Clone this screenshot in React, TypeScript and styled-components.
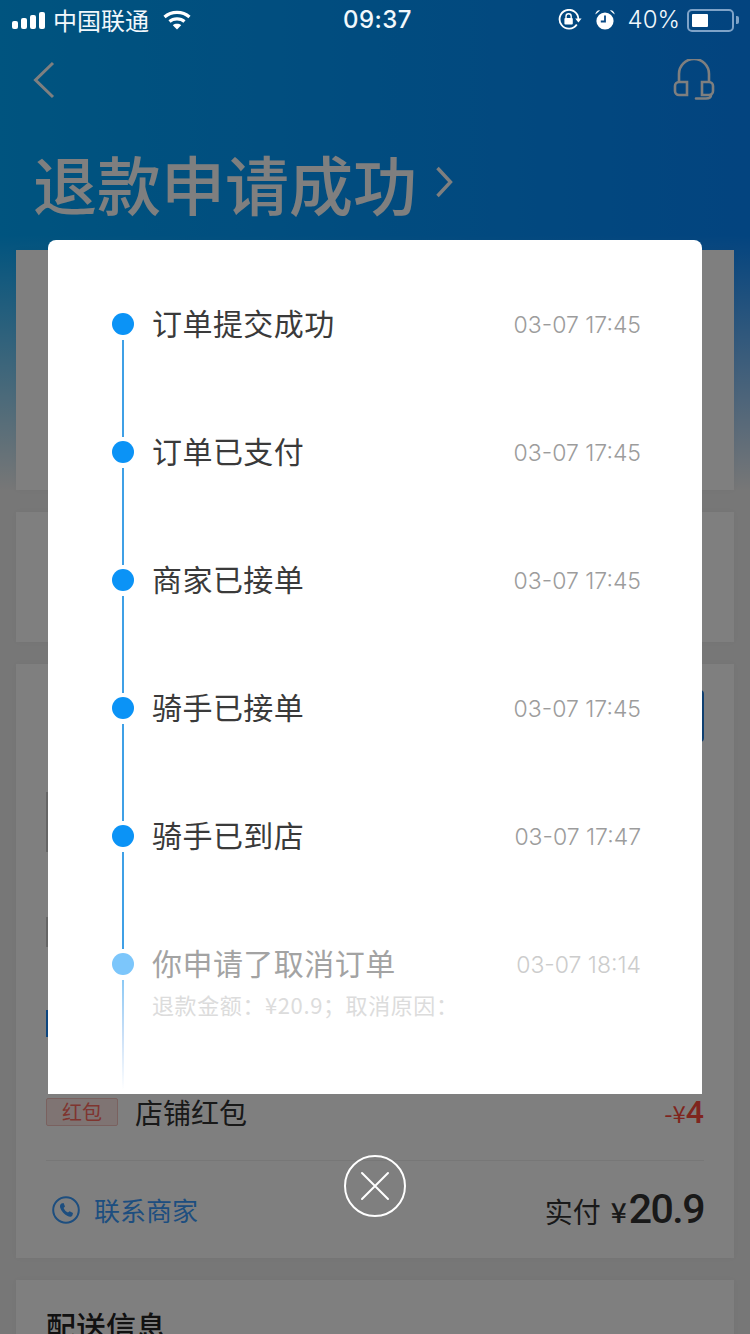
import styled, { createGlobalStyle } from "styled-components";

const CJK = `"Noto Sans CJK SC", "Noto Sans", sans-serif`;
const LATIN = `Inter, "Noto Sans CJK SC", sans-serif`;

const GlobalStyle = createGlobalStyle`
    html, body {
        margin: 0;
        padding: 0;
        background: #eeeeee;
    }
    * {
        box-sizing: border-box;
    }
`;

const STEPS = [
    { title: "订单提交成功", time: "03-07 17:45" },
    { title: "订单已支付", time: "03-07 17:45" },
    { title: "商家已接单", time: "03-07 17:45" },
    { title: "骑手已接单", time: "03-07 17:45" },
    { title: "骑手已到店", time: "03-07 17:47" },
];

const App = () => {
    return (
        <Page>
            <GlobalStyle />
            <StatusBar>
                <StatusSide>
                    <SignalBars>
                        <Bar $h={8} />
                        <Bar $h={11} />
                        <Bar $h={14} />
                        <Bar $h={17} />
                    </SignalBars>
                    <Carrier>中国联通</Carrier>
                    <WifiIcon />
                </StatusSide>
                <Clock>09:37</Clock>
                <StatusRight>
                    <RotationLockIcon />
                    <AlarmIcon />
                    <BatteryText>40%</BatteryText>
                    <Battery>
                        <BatteryFill />
                    </Battery>
                    <BatteryTip />
                </StatusRight>
            </StatusBar>

            <NavBar>
                <BackIcon />
                <HeadsetIcon />
            </NavBar>

            <TitleRow>
                <PageTitle>退款申请成功</PageTitle>
                <TitleChevron />
            </TitleRow>

            <Cards>
                <StatusCard />
                <RiderCard />
                <OrderCard>
                    <OrderButton />
                    <ItemThumb />
                    <ItemNote />
                    <ItemTag />
                    <DiscountRow>
                        <DiscountLeft>
                            <RedTag>红包</RedTag>
                            <DiscountName>店铺红包</DiscountName>
                        </DiscountLeft>
                        <DiscountValue>
                            -¥<strong>4</strong>
                        </DiscountValue>
                    </DiscountRow>
                    <Divider />
                    <OrderFooter>
                        <ContactLink>
                            <PhoneIcon />
                            <span>联系商家</span>
                        </ContactLink>
                        <PaidTotal>
                            实付<Yen>¥</Yen>
                            <Amount>20.9</Amount>
                        </PaidTotal>
                    </OrderFooter>
                </OrderCard>
                <DeliveryCard>
                    <DeliveryTitle>配送信息</DeliveryTitle>
                </DeliveryCard>
            </Cards>

            <Overlay>
                <Modal>
                    {STEPS.map((step) => (
                        <Step key={step.title}>
                            <Rail>
                                <Dot />
                                <RailLine />
                            </Rail>
                            <StepBody>
                                <StepHead>
                                    <StepTitle>{step.title}</StepTitle>
                                    <StepTime>{step.time}</StepTime>
                                </StepHead>
                            </StepBody>
                        </Step>
                    ))}
                    <Step $last>
                        <Rail>
                            <Dot $faded />
                            <RailLine $fading />
                        </Rail>
                        <StepBody>
                            <StepHead>
                                <StepTitle $faded>你申请了取消订单</StepTitle>
                                <StepTime $faded>03-07 18:14</StepTime>
                            </StepHead>
                            <StepNote>退款金额：¥20.9；取消原因：</StepNote>
                        </StepBody>
                    </Step>
                </Modal>
                <CloseButton aria-label="关闭">
                    <svg width="30" height="30" viewBox="0 0 30 30" fill="none" stroke="#fff" strokeWidth="2" strokeLinecap="round">
                        <path d="M2 2 L28 28 M28 2 L2 28" />
                    </svg>
                </CloseButton>
            </Overlay>
        </Page>
    );
};

const WifiIcon = () => (
    <WifiSvg viewBox="0 0 28 20" fill="none" stroke="#fff" strokeWidth="3.2">
        <path d="M1.5 7 C8.5 0.8 19.5 0.8 26.5 7" />
        <path d="M6.5 11.5 C10.5 8 17.5 8 21.5 11.5" />
        <path d="M14 19.5 L9.8 15.2 C12 13.4 16 13.4 18.2 15.2 Z" fill="#fff" stroke="none" />
    </WifiSvg>
);

const RotationLockIcon = () => (
    <svg width="24" height="22" viewBox="0 0 24 22" fill="none">
        <path d="M18.8 15.5 A9.4 9.4 0 1 1 20.4 10" stroke="#fff" strokeWidth="1.8" />
        <path d="M17.2 9.6 L23.6 9.6 L20.4 13.4 Z" fill="#fff" />
        <rect x="6.4" y="9" width="8.4" height="6.6" rx="1" fill="#fff" />
        <path d="M8 9 V7.4 A2.6 2.6 0 0 1 13.2 7.4 V9" stroke="#fff" strokeWidth="1.4" />
    </svg>
);

const AlarmIcon = () => (
    <svg width="22" height="22" viewBox="0 0 22 22" fill="none">
        <circle cx="11" cy="12" r="8.6" fill="#fff" />
        <path d="M11 6.5 V12.5 H6.8" stroke="#0a4a85" strokeWidth="1.8" />
        <path d="M1.4 5.6 A4 4 0 0 1 6 1.4 Z M20.6 5.6 A4 4 0 0 0 16 1.4 Z" fill="#fff" />
    </svg>
);

const BackIcon = () => (
    <svg width="24" height="38" viewBox="0 0 24 38" fill="none" stroke="#ffffff" strokeWidth="3">
        <path d="M21 2 L3.5 19 L21 36" />
    </svg>
);

const HeadsetIcon = () => (
    <svg width="42" height="42" viewBox="0 0 42 42" fill="none" stroke="#ffffff" strokeWidth="2.6">
        <path d="M6 22 V15 A15 15 0 0 1 36 15 V22" />
        <path d="M14 23 H6 A4 4 0 0 0 2 27 V32 A4 4 0 0 0 6 36 H14 Z" />
        <path d="M29 23 H36 A4 4 0 0 1 40 27 V32 A4 4 0 0 1 36 36 H29 Z" />
        <path d="M38 36 Q38 39.5 33 39.5 H23" strokeLinecap="round" />
    </svg>
);

const TitleChevron = () => (
    <ChevronSvg viewBox="0 0 18 32" fill="none" stroke="#ffffff" strokeWidth="3.4">
        <path d="M2.5 2 L15.5 16 L2.5 30" />
    </ChevronSvg>
);

const PhoneIcon = () => (
    <svg width="28" height="28" viewBox="0 0 28 28" fill="none">
        <circle cx="14" cy="14" r="12.8" stroke="#3a9cff" strokeWidth="2" />
        <path
            d="M9.4 7.4 L11.6 7 L13 10.6 L11.6 12 C12.2 13.8 14 15.8 16 16.6 L17.6 15.2 L21 17 L20.4 19.4 C19.6 20.8 17.6 21 15.6 20 C12 18.4 9.4 15.4 8.2 11.8 C7.6 9.8 8.2 8.2 9.4 7.4 Z"
            fill="#3a9cff"
        />
    </svg>
);

const Page = styled("div")`
    position: relative;
    width: 750px;
    height: 1334px;
    overflow: hidden;
    font-family: ${CJK};
    background:
        linear-gradient(to bottom, rgba(238, 238, 238, 0) 235px, #eeeeee 490px),
        linear-gradient(to right, #00a8ff, #0688ff);
`;

const StatusBar = styled("div")`
    position: relative;
    z-index: 2;
    display: grid;
    grid-template-columns: 1fr auto 1fr;
    align-items: center;
    height: 40px;
    padding: 0 11px 0 12px;
    color: #f2f8fc;
`;

const StatusSide = styled("div")`
    display: flex;
    align-items: center;
`;

const SignalBars = styled("div")`
    display: flex;
    align-items: flex-end;
    gap: 3px;
    height: 18px;
`;

const Bar = styled("span")<{ $h: number }>`
    width: 6px;
    height: ${(p) => p.$h}px;
    border-radius: 2px;
    background: #fff;
`;

const Carrier = styled("span")`
    margin-left: 8px;
    font-size: 24px;
    line-height: 30px;
`;

const WifiSvg = styled("svg")`
    width: 28px;
    height: 20px;
    margin-left: 14px;
`;

const Clock = styled("span")`
    margin-left: 4px;
    font-family: ${LATIN};
    font-size: 24px;
    font-weight: 500;
    letter-spacing: 0.5px;
    line-height: 30px;
`;

const StatusRight = styled("div")`
    display: flex;
    align-items: center;
    justify-content: flex-end;
    gap: 12px;
`;

const BatteryText = styled("span")`
    margin-right: -5px;
    font-family: ${LATIN};
    font-size: 24px;
    font-weight: 300;
    line-height: 30px;
`;

const Battery = styled("div")`
    width: 47px;
    height: 23px;
    padding: 3px;
    border: 2px solid #7fa3c8;
    border-radius: 5px;
`;

const BatteryFill = styled("div")`
    width: 16px;
    height: 100%;
    background: #fff;
    border-radius: 1px;
`;

const BatteryTip = styled("span")`
    width: 3px;
    height: 8px;
    margin-left: -10px;
    background: #7fa3c8;
    border-radius: 0 2px 2px 0;
`;

const NavBar = styled("div")`
    display: flex;
    align-items: center;
    justify-content: space-between;
    height: 42px;
    margin-top: 19px;
    padding: 0 35px 0 32px;
`;

const TitleRow = styled("div")`
    display: flex;
    align-items: center;
    gap: 18px;
    height: 90px;
    margin-top: 36px;
    padding-left: 33px;
`;

const PageTitle = styled("h1")`
    margin: 0;
    font-size: 64px;
    line-height: 90px;
    font-weight: 500;
    color: #ffffff;
`;

const ChevronSvg = styled("svg")`
    width: 18px;
    height: 32px;
`;

const Cards = styled("div")`
    display: flex;
    flex-direction: column;
    gap: 22px;
    margin-top: 23px;
    padding: 0 16px;
`;

const Card = styled("div")`
    background: #ffffff;
    box-shadow: 0 0 6px rgba(0, 0, 0, 0.03);
`;

const StatusCard = styled(Card)`
    height: 240px;
`;

const RiderCard = styled(Card)`
    height: 130px;
`;

const OrderCard = styled(Card)`
    height: 594px;
    padding: 26px 30px 0 30px;
`;

const OrderButton = styled("div")`
    width: 180px;
    height: 52px;
    margin-left: auto;
    border: 2px solid #1f7fe0;
    border-radius: 4px;
`;

const ItemThumb = styled("div")`
    width: 110px;
    height: 60px;
    margin-top: 50px;
    border: 2px solid #cccccc;
`;

const ItemNote = styled("div")`
    width: 60px;
    height: 30px;
    margin-top: 65px;
    border: 2px solid #cccccc;
`;

const ItemTag = styled("div")`
    width: 60px;
    height: 27px;
    margin-top: 63px;
    background: #1a8cff;
`;

const DiscountRow = styled("div")`
    display: flex;
    align-items: center;
    justify-content: space-between;
    height: 40px;
    margin-top: 55px;
`;

const DiscountLeft = styled("div")`
    display: flex;
    align-items: center;
    gap: 17px;
`;

const RedTag = styled("span")`
    width: 72px;
    height: 28px;
    border: 1px solid #f4c3be;
    border-radius: 2px;
    background: #ffe9e6;
    color: #ff6a5f;
    font-size: 20px;
    line-height: 26px;
    text-align: center;
`;

const DiscountName = styled("span")`
    color: #333333;
    font-size: 28px;
    line-height: 40px;
`;

const DiscountValue = styled("span")`
    color: #ff4a3d;
    font-size: 24px;
    line-height: 40px;

    strong {
        font-family: "Roboto", sans-serif;
        font-size: 32px;
        font-weight: 500;
    }
`;

const Divider = styled("div")`
    height: 1px;
    margin-top: 28px;
    background: #eeeeee;
`;

const OrderFooter = styled("div")`
    display: flex;
    align-items: center;
    justify-content: space-between;
    height: 50px;
    margin-top: 24px;
`;

const ContactLink = styled("div")`
    display: flex;
    align-items: center;
    gap: 14px;
    padding-left: 6px;
    color: #3a9cff;
    font-size: 26px;
    line-height: 36px;
`;

const PaidTotal = styled("div")`
    display: flex;
    align-items: baseline;
    margin-top: -2px;
    color: #333333;
    font-size: 28px;
`;

const Yen = styled("span")`
    margin-left: 10px;
    font-weight: 500;
`;

const Amount = styled("span")`
    margin-left: 2px;
    font-family: "Roboto", sans-serif;
    font-size: 41px;
    font-weight: 500;
    letter-spacing: -1.5px;
`;

const DeliveryCard = styled(Card)`
    height: 200px;
    padding: 25px 30px;
`;

const DeliveryTitle = styled("h2")`
    margin: 0;
    color: #222222;
    font-size: 30px;
    font-weight: 500;
    line-height: 40px;
`;

const Overlay = styled("div")`
    position: absolute;
    inset: 0;
    z-index: 1;
    display: flex;
    flex-direction: column;
    align-items: center;
    padding-top: 240px;
    background: rgba(0, 0, 0, 0.5);
`;

const Modal = styled("div")`
    width: 654px;
    height: 854px;
    padding: 73px 61px 0 64px;
    background: #ffffff;
    border-radius: 8px 8px 0 0;
`;

const Step = styled("div")<{ $last?: boolean }>`
    display: flex;
    gap: 18px;
    height: ${(p) => (p.$last ? 137 : 128)}px;
`;

const Rail = styled("div")`
    display: flex;
    flex-direction: column;
    align-items: center;
    flex: none;
    width: 22px;
`;

const Dot = styled("span")<{ $faded?: boolean }>`
    flex: none;
    width: 22px;
    height: 22px;
    border-radius: 50%;
    background: ${(p) => (p.$faded ? "#7cc6fb" : "#0b93f6")};
`;

const RailLine = styled("span")<{ $fading?: boolean }>`
    flex: 1;
    width: 2px;
    margin: ${(p) => (p.$fading ? "5px 0 0" : "5px 0 4px")};
    background: ${(p) =>
        p.$fading ? "linear-gradient(to bottom, #8cc9f5, #c9dff7 50%, #ffffff)" : "#3fa0e6"};
`;

const StepBody = styled("div")`
    flex: 1;
    min-width: 0;
`;

const StepHead = styled("div")`
    display: flex;
    align-items: center;
    justify-content: space-between;
    height: 22px;
`;

const StepTitle = styled("span")<{ $faded?: boolean }>`
    margin-top: -4px;
    color: ${(p) => (p.$faded ? "#a3a3a3" : "#3a3a3a")};
    font-size: 30px;
    letter-spacing: 0.45px;
    line-height: 40px;
`;

const StepTime = styled("span")<{ $faded?: boolean }>`
    margin-top: 1px;
    color: ${(p) => (p.$faded ? "#cccccc" : "#9c9c9c")};
    font-family: ${LATIN};
    font-size: 23px;
    font-weight: 300;
    line-height: 30px;
`;

const StepNote = styled("p")`
    margin: 14px 0 0;
    color: #dcdcdc;
    font-size: 22px;
    letter-spacing: 0.6px;
    line-height: 30px;
    white-space: nowrap;
`;

const CloseButton = styled("button")`
    display: flex;
    align-items: center;
    justify-content: center;
    width: 62px;
    height: 62px;
    margin-top: 61px;
    padding: 0;
    background: transparent;
    border: 2px solid #ffffff;
    border-radius: 50%;
`;

export default App;
